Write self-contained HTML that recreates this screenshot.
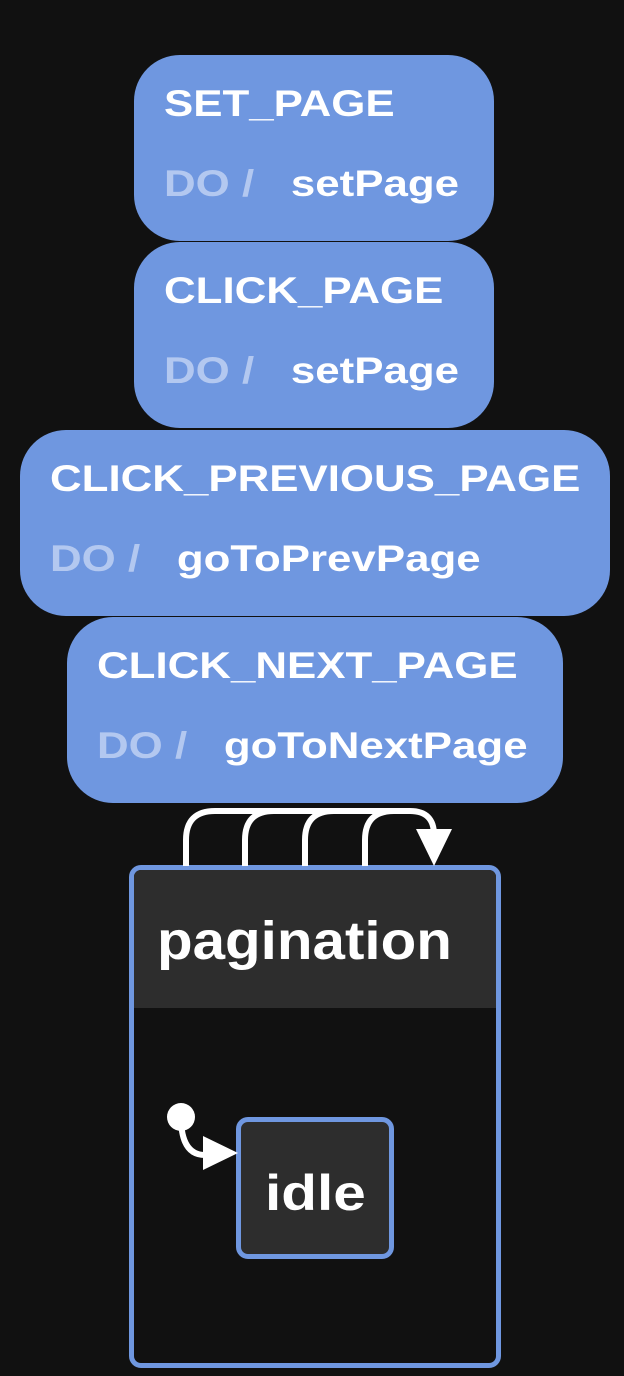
<!DOCTYPE html>
<html><head><style>
body{margin:0;width:624px;height:1376px;background:#111;position:relative;overflow:hidden;font-family:"Liberation Sans",sans-serif;font-weight:bold;color:#fff}
.p{position:absolute;background:#6f97e0;border-radius:46px;height:186px;box-sizing:border-box;padding-left:30px}
.t,.d{position:absolute;left:30px;font-size:37px;white-space:nowrap;transform:scaleX(1.185);transform-origin:0 0}
.t{top:28px}
.d{top:108px}
.d span{color:#b3c8f0;margin-right:31px}
</style></head><body>
<div class="p" style="left:134px;top:55px;width:360px"><div class="t">SET_PAGE</div><div class="d"><span>DO /</span>setPage</div></div>
<div class="p" style="left:134px;top:242px;width:360px"><div class="t">CLICK_PAGE</div><div class="d"><span>DO /</span>setPage</div></div>
<div class="p" style="left:20px;top:430px;width:590px"><div class="t">CLICK_PREVIOUS_PAGE</div><div class="d"><span>DO /</span>goToPrevPage</div></div>
<div class="p" style="left:67px;top:617px;width:496px"><div class="t">CLICK_NEXT_PAGE</div><div class="d"><span>DO /</span>goToNextPage</div></div>
<div style="position:absolute;left:129px;top:865px;width:372px;height:503px;box-sizing:border-box;border:5px solid #6f97e0;border-radius:12px;overflow:hidden;background:#111">
<div style="height:138px;background:#2d2d2d;position:relative"><div style="position:absolute;left:23px;top:40px;font-size:54px;transform:scaleX(1.08);transform-origin:0 0">pagination</div></div>
</div>
<div style="position:absolute;left:236px;top:1117px;width:158px;height:142px;box-sizing:border-box;border:5px solid #6f97e0;border-radius:12px;background:#2d2d2d">
<div style="position:absolute;left:24px;top:42px;font-size:50px;transform:scaleX(1.17);transform-origin:0 0">idle</div></div>
<svg style="position:absolute;left:0;top:0" width="624" height="1376">
<g fill="none" stroke="#fff" stroke-width="6">
<path d="M186 866 V840 Q186 811 215 811 H410 Q434 811 434 835 V840"/>
<path d="M245 866 V840 Q245 811 274 811"/>
<path d="M305 866 V840 Q305 811 334 811"/>
<path d="M365 866 V840 Q365 811 394 811"/>
<path d="M181 1117 Q181 1155 205 1155"/>
</g>
<polygon points="416,829 452,829 434,866" fill="#fff"/>
<circle cx="181" cy="1117" r="14" fill="#fff"/>
<polygon points="203,1136 203,1170 238,1153" fill="#fff"/>
</svg>
</body></html>
